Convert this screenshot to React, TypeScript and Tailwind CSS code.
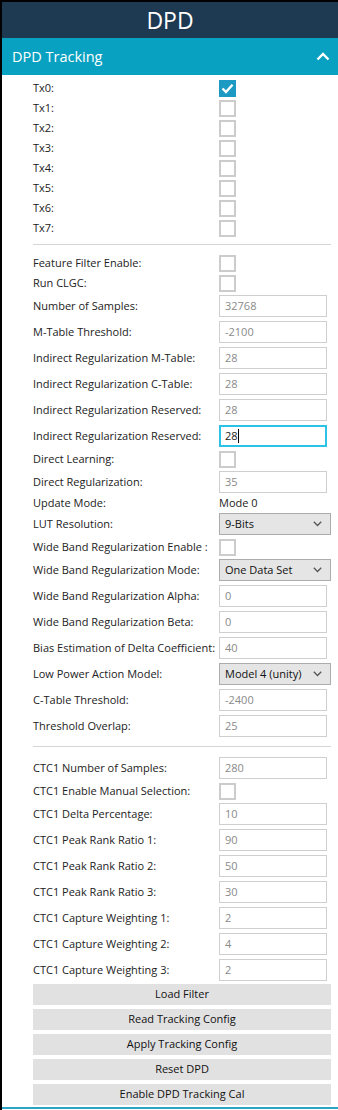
import React from "react";

const font = { fontFamily: '"Open Sans", "Noto Sans", "Liberation Sans", sans-serif' };

function Check({ checked = false }: { checked?: boolean }) {
  if (checked) {
    return (
      <div className="w-[17px] h-[17px] bg-[#1d9ac4] flex items-center justify-center">
        <svg width="13" height="11" viewBox="0 0 13 11">
          <path d="M1.5 5.5 L5 9 L11.5 1.8" fill="none" stroke="white" strokeWidth="2.4" />
        </svg>
      </div>
    );
  }
  return <div className="w-[17px] h-[17px] border-2 border-[#cccccc] bg-white" />;
}

function CheckRow({ label, checked }: { label: string; checked?: boolean }) {
  return (
    <div className="flex items-center h-[20px]">
      <div className="w-[186px] text-[11px] text-[#222] whitespace-nowrap">{label}</div>
      <Check checked={checked} />
    </div>
  );
}

function InputRow({ label, value }: { label: string; value: string }) {
  return (
    <div className="flex items-center h-[26px]">
      <div className="w-[186px] text-[11px] text-[#222] whitespace-nowrap">{label}</div>
      <div className="w-[108px] h-[22px] border border-[#cfcfcf] bg-white flex items-center pl-[5px] text-[11px] text-[#8a8a8a]">
        {value}
      </div>
    </div>
  );
}

function FocusedInputRow({ label, value }: { label: string; value: string }) {
  return (
    <div className="flex items-center h-[26px]">
      <div className="w-[186px] text-[11px] text-[#222] whitespace-nowrap">{label}</div>
      <div className="w-[108px] h-[22px] border-2 border-[#2ec3e6] bg-white flex items-center pl-[4px] text-[11px] text-[#222]">
        {value}
        <span className="inline-block w-px h-[14px] bg-black" />
      </div>
    </div>
  );
}

function SelectRow({ label, value }: { label: string; value: string }) {
  return (
    <div className="flex items-center h-[26px]">
      <div className="w-[186px] text-[11px] text-[#222] whitespace-nowrap">{label}</div>
      <div className="w-[112px] h-[22px] border border-[#acacac] bg-[#e5e5e5] flex items-center justify-between pl-[5px] pr-[8px] text-[11px] text-[#111]">
        <span>{value}</span>
        <svg width="9" height="6" viewBox="0 0 9 6">
          <path d="M0.8 0.8 L4.5 4.5 L8.2 0.8" fill="none" stroke="#555" strokeWidth="1.3" />
        </svg>
      </div>
    </div>
  );
}

function Button({ label }: { label: string }) {
  return (
    <div className="h-[21px] bg-[#e1e1e1] flex items-center justify-center text-[11px] text-[#111]">{label}</div>
  );
}

export default function App() {
  return (
    <div className="w-[338px] h-[1110px] bg-white border-t-2 border-l-2 border-black flex flex-col" style={font}>
      <div className="h-[36px] bg-[#1e3a52] flex items-center justify-center text-white text-[23px]">DPD</div>
      <div className="h-[37px] bg-[#09a1c1] flex items-center justify-between pl-[10px] pr-[8px] text-white text-[14.5px]">
        <span>DPD Tracking</span>
        <svg width="14" height="9" viewBox="0 0 14 9">
          <path d="M1.5 7.5 L7 2 L12.5 7.5" fill="none" stroke="white" strokeWidth="2.4" />
        </svg>
      </div>
      <div className="flex-1 flex flex-col pl-[31px] pr-[7px] pt-[3px]">
        <CheckRow label="Tx0:" checked />
        <CheckRow label="Tx1:" />
        <CheckRow label="Tx2:" />
        <CheckRow label="Tx3:" />
        <CheckRow label="Tx4:" />
        <CheckRow label="Tx5:" />
        <CheckRow label="Tx6:" />
        <CheckRow label="Tx7:" />
        <div className="h-px bg-[#d5d5d5] mt-[6px] mb-[8px]" />
        <CheckRow label="Feature Filter Enable:" />
        <CheckRow label="Run CLGC:" />
        <InputRow label="Number of Samples:" value="32768" />
        <InputRow label="M-Table Threshold:" value="-2100" />
        <InputRow label="Indirect Regularization M-Table:" value="28" />
        <InputRow label="Indirect Regularization C-Table:" value="28" />
        <InputRow label="Indirect Regularization Reserved:" value="28" />
        <FocusedInputRow label="Indirect Regularization Reserved:" value="28" />
        <CheckRow label="Direct Learning:" />
        <InputRow label="Direct Regularization:" value="35" />
        <div className="flex items-center h-[16px]">
          <div className="w-[186px] text-[11px] text-[#222]">Update Mode:</div>
          <div className="text-[11px] text-[#222]">Mode 0</div>
        </div>
        <SelectRow label="LUT Resolution:" value="9-Bits" />
        <CheckRow label="Wide Band Regularization Enable :" />
        <SelectRow label="Wide Band Regularization Mode:" value="One Data Set" />
        <InputRow label="Wide Band Regularization Alpha:" value="0" />
        <InputRow label="Wide Band Regularization Beta:" value="0" />
        <InputRow label="Bias Estimation of Delta Coefficient:" value="40" />
        <SelectRow label="Low Power Action Model:" value="Model 4 (unity)" />
        <InputRow label="C-Table Threshold:" value="-2400" />
        <InputRow label="Threshold Overlap:" value="25" />
        <div className="h-px bg-[#d5d5d5] mt-[7px] mb-[8px]" />
        <InputRow label="CTC1 Number of Samples:" value="280" />
        <CheckRow label="CTC1 Enable Manual Selection:" />
        <InputRow label="CTC1 Delta Percentage:" value="10" />
        <InputRow label="CTC1 Peak Rank Ratio 1:" value="90" />
        <InputRow label="CTC1 Peak Rank Ratio 2:" value="50" />
        <InputRow label="CTC1 Peak Rank Ratio 3:" value="30" />
        <InputRow label="CTC1 Capture Weighting 1:" value="2" />
        <InputRow label="CTC1 Capture Weighting 2:" value="4" />
        <InputRow label="CTC1 Capture Weighting 3:" value="2" />
        <div className="flex flex-col gap-[4px] mt-[1px]">
          <Button label="Load Filter" />
          <Button label="Read Tracking Config" />
          <Button label="Apply Tracking Config" />
          <Button label="Reset DPD" />
          <Button label="Enable DPD Tracking Cal" />
        </div>
      </div>
      <div className="h-[2px] bg-[#2aa3c4] mb-[1px]" />
    </div>
  );
}
